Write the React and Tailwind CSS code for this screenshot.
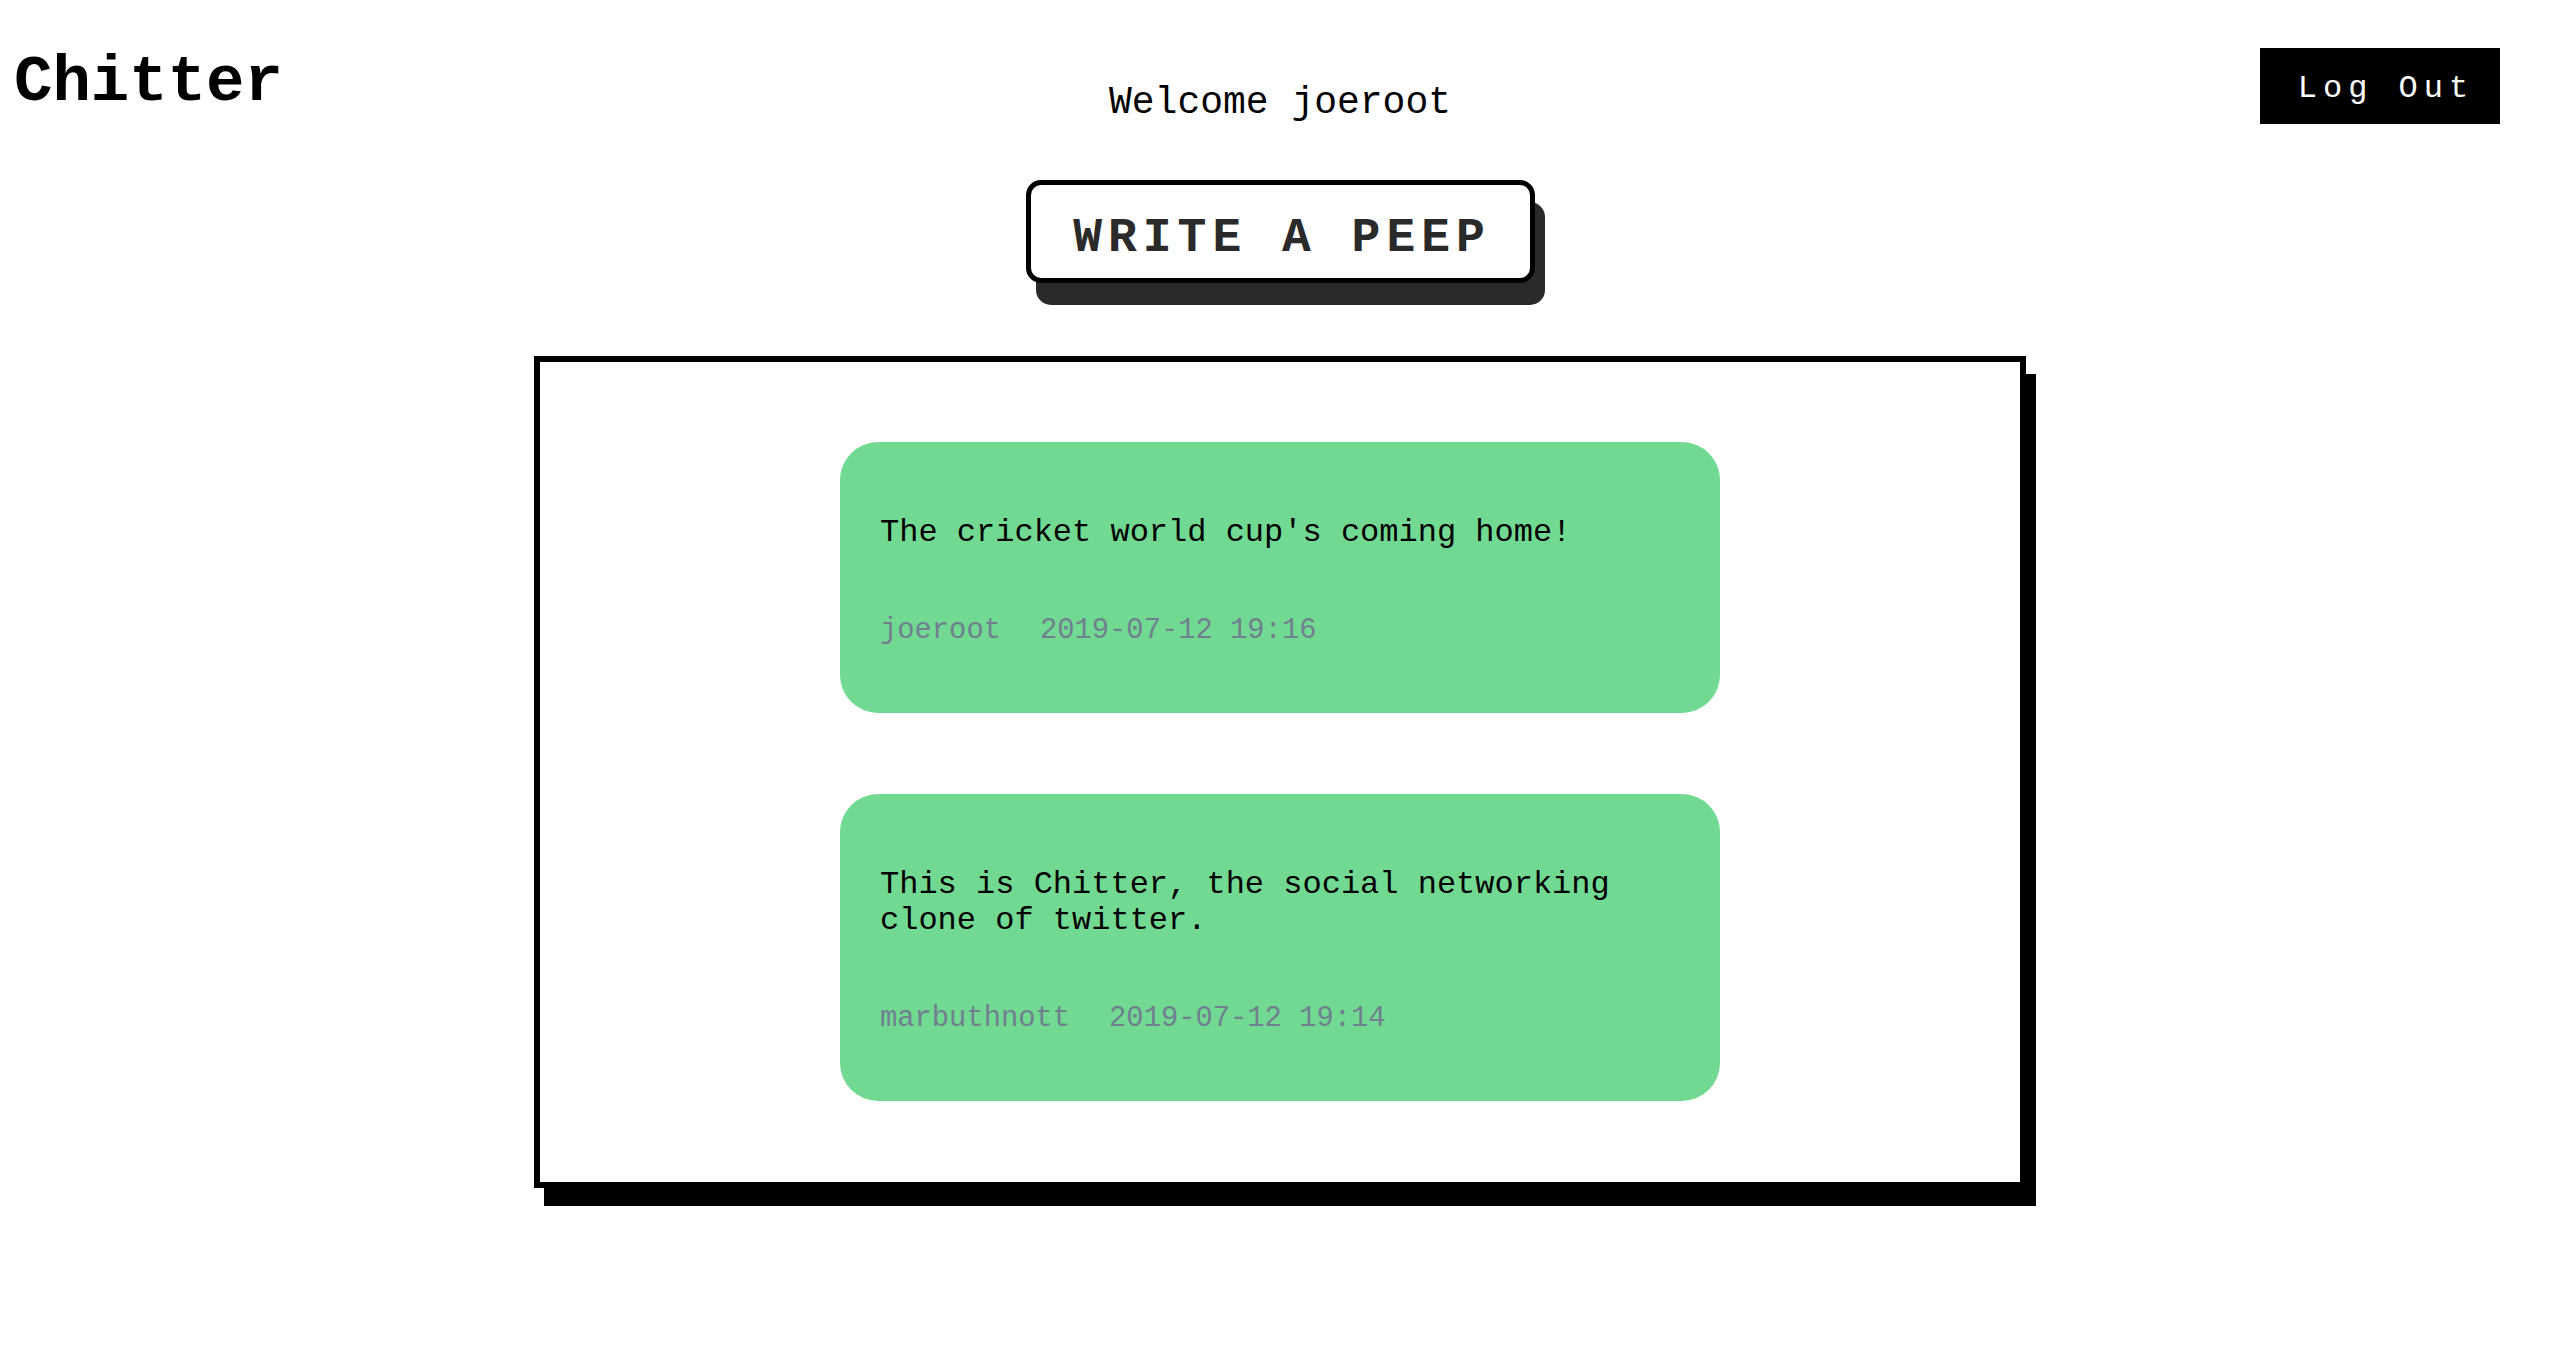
const peeps = [
  {
    id: 2,
    text: "The cricket world cup's coming home!",
    user: 'joeroot',
    time: '2019-07-12 19:16',
  },
  {
    id: 1,
    text: 'This is Chitter, the social networking clone of twitter.',
    user: 'marbuthnott',
    time: '2019-07-12 19:14',
  },
];

const Peep = ({ peep }) => (
  <div className="w-[880px] rounded-[38px] bg-[#72d992] px-[40px] pt-[73px] pb-[66px]">
    <p className="text-[32px] leading-[36px] text-black">{peep.text}</p>
    <div className="mt-[63px] flex gap-[39px] text-[28.8px] leading-[33px] text-[#708090]">
      <span>{peep.user}</span>
      <span>{peep.time}</span>
    </div>
  </div>
);

const App = () => {
  return (
    <div className="min-h-screen bg-white font-['Courier_New','Liberation_Mono',monospace] text-black">
      <header className="grid grid-cols-[1fr_auto_1fr] items-start">
        <h1 className="mt-[47px] pl-[14px] text-[64px] font-bold leading-[72px]">Chitter</h1>
        <p className="mt-[81px] text-[38px] leading-[43px]">Welcome joeroot</p>
        <div className="flex justify-end">
          <button className="mt-[48px] mr-[60px] flex h-[76px] w-[240px] items-center justify-center bg-black pt-[6px] pl-[12px] text-[32px] tracking-[6px] text-white">
            Log Out
          </button>
        </div>
      </header>

      <div className="mt-[56px] flex justify-center">
        <button className="flex h-[103px] w-[509px] items-center justify-center rounded-[15px] border-[5px] border-black bg-white pt-[12px] pl-[4px] text-[48px] font-bold tracking-[6px] text-[#2a2a2a] shadow-[10px_22px_0_#2a2a2a]">
          WRITE A PEEP
        </button>
      </div>

      <div className="mt-[73px] flex justify-center">
        <div className="flex w-[1492px] flex-col items-center gap-[81px] border-[6px] border-black bg-white pt-[80px] pb-[81px] shadow-[10px_18px_0_#000]">
          {peeps.map((peep) => (
            <Peep key={peep.id} peep={peep} />
          ))}
        </div>
      </div>
    </div>
  );
};

export default App;
